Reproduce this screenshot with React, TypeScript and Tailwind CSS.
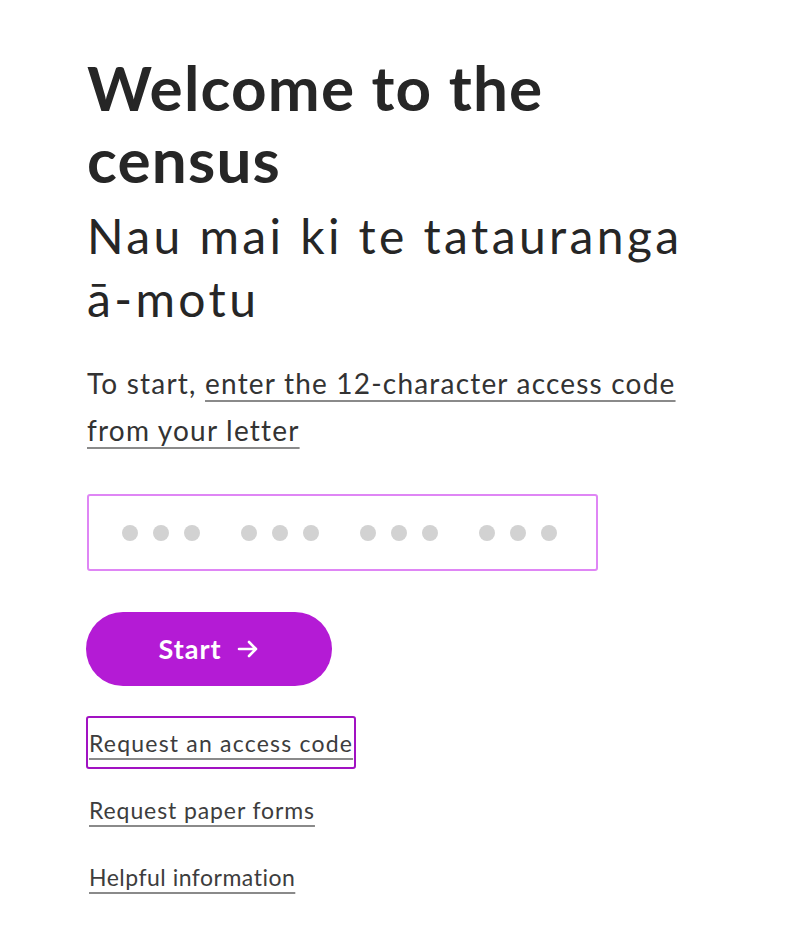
import React from 'react'

const groups = [0, 1, 2, 3]

export default function App() {
  return (
    <div className="min-h-screen bg-white font-['Lato',sans-serif] text-[#262626]">
      <main className="pl-[87px] pr-8 pt-[51px]">
        {/* Headings */}
        <h1 className="text-[62px] font-bold leading-[72px] tracking-[1.2px] text-[#262626]">
          Welcome to the
          <br />
          census
        </h1>
        <h2 className="mt-[9px] text-[48px] font-normal leading-[63px] tracking-[3.4px] text-[#262626]">
          Nau mai ki te tatauranga
          <br />
          ā-motu
        </h2>

        {/* Intro */}
        <p className="mt-[30px] max-w-[600px] text-[28px] leading-[47px] tracking-[1.2px] text-[#333333]">
          To start,{' '}
          <a href="#" className="underline decoration-[#8a8a8a] decoration-2 underline-offset-[6px]">
            enter the 12-character access code from your letter
          </a>
        </p>

        {/* Code input */}
        <div className="mt-[40px] flex h-[77px] w-[511px] items-center gap-[41px] rounded-[3px] border-2 border-[#df86f5] pl-[33px]">
          {groups.map((g) => (
            <div key={g} className="flex gap-[15px]">
              <span className="h-[16px] w-[16px] rounded-full bg-[#d2d2d2]" />
              <span className="h-[16px] w-[16px] rounded-full bg-[#d2d2d2]" />
              <span className="h-[16px] w-[16px] rounded-full bg-[#d2d2d2]" />
            </div>
          ))}
        </div>

        {/* Start button */}
        <button className="ml-[-1px] mt-[41px] flex h-[74px] w-[246px] items-center justify-center gap-[14px] rounded-full bg-[#b41bd5] text-[27px] font-bold tracking-[1px] text-white">
          Start
          <svg className="h-[24px] w-[24px]" viewBox="0 0 24 24" fill="none" stroke="currentColor" strokeWidth={2.6} strokeLinecap="round" strokeLinejoin="round">
            <path d="M3 12h17M13 5l7 7-7 7" />
          </svg>
        </button>

        {/* Links */}
        <div className="mt-[30px] flex flex-col items-start">
          <a href="#" className="ml-[-1px] rounded-[3px] border-2 border-[#a112c2] pb-[9px] pl-[1px] pr-[1px] pt-[10px] text-[23px] leading-[30px] tracking-[1.2px] text-[#3d3d3d] underline decoration-[#8a8a8a] decoration-2 underline-offset-[6px]">
            Request an access code
          </a>
          <a href="#" className="mt-[26px] pl-[2px] text-[23px] leading-[30px] tracking-[0.9px] text-[#3d3d3d] underline decoration-[#8a8a8a] decoration-2 underline-offset-[6px]">
            Request paper forms
          </a>
          <a href="#" className="mt-[37px] pl-[2px] text-[23px] leading-[30px] tracking-[0.5px] text-[#3d3d3d] underline decoration-[#8a8a8a] decoration-2 underline-offset-[6px]">
            Helpful information
          </a>
        </div>
      </main>
    </div>
  )
}
